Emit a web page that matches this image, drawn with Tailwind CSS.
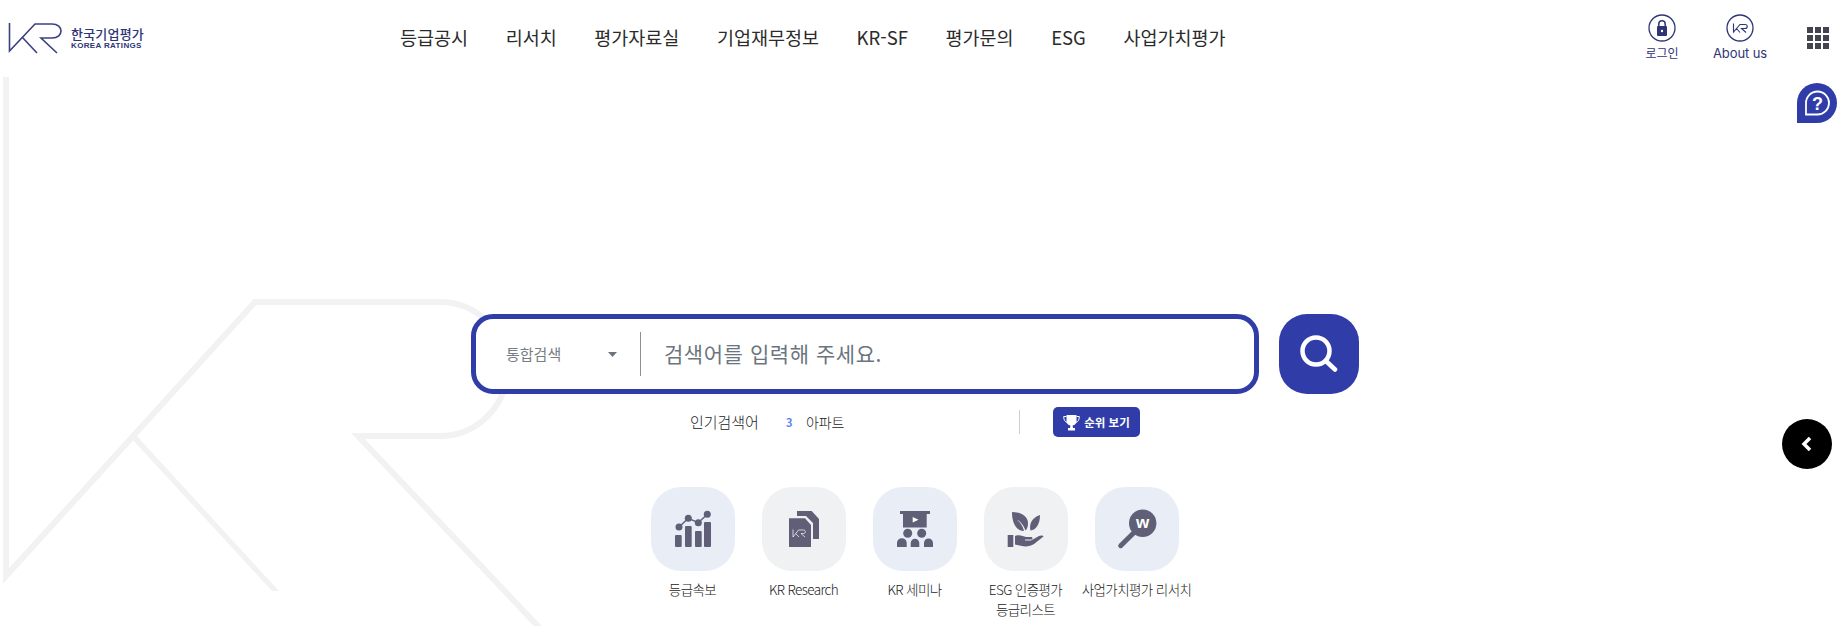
<!DOCTYPE html>
<html lang="ko">
<head>
<meta charset="utf-8">
<title>한국기업평가</title>
<script src="https://cdn.jsdelivr.net/npm/@tailwindcss/browser@4"></script>
</head>
<body class="relative h-[626px] w-[1837px] overflow-hidden bg-white font-['Noto_Sans_CJK_KR','Noto_Sans',sans-serif] text-[#333]">
<!-- background KR watermark -->
<svg class="absolute left-0 top-0" width="1837" height="626" viewBox="0 0 1837 626" fill="none" stroke="#f2f2f2" stroke-width="6">
  <path d="M6 77V576L255 302H440A67 67 0 0 1 440 436H358L551 640"/>
  <polygon points="135,434 279,591 272,591 131,438" fill="#f2f2f2" stroke="none"/>
</svg>

<header class="relative flex h-[78px] items-start">
  <div class="flex w-[400px] items-center gap-[9px] pl-[8px] pt-[22px]">
    <svg width="54" height="32" viewBox="0 0 54 32" fill="none" stroke="#3a4180" stroke-width="1.6">
      <path d="M1.5 1V29L27 2H44C56 2 56 16 44 16H33L49 31"/>
      <path d="M14 15L29 31"/>
    </svg>
    <div class="flex flex-col text-[#2e3577]">
      <span class="text-[13px] font-medium leading-[14px] tracking-[0.2px]">한국기업평가</span>
      <span class="font-['Liberation_Sans',sans-serif] text-[8px] font-bold leading-[9px] tracking-[0.35px]">KOREA RATINGS</span>
    </div>
  </div>
  <nav class="flex gap-[37.700px] pt-[24px] text-[18.500px] leading-[26px] tracking-[-0.03px] text-[#2b2b2b]">
    <a>등급공시</a><a>리서치</a><a>평가자료실</a><a>기업재무정보</a><a>KR-SF</a><a>평가문의</a><a>ESG</a><a>사업가치평가</a>
  </nav>
  <div class="ml-auto flex items-start pr-[8px] pt-[14px]">
    <div class="flex w-[60px] flex-col items-center">
      <svg width="28" height="28" viewBox="0 0 28 28">
        <circle cx="14" cy="14" r="13" fill="none" stroke="#2e3577" stroke-width="1.3"/>
        <rect x="9" y="12" width="10" height="10" rx="1" fill="#2e3577"/>
        <path d="M10.8 12V10a3.2 3.2 0 0 1 6.4 0V12" fill="none" stroke="#2e3577" stroke-width="1.5"/>
        <circle cx="14" cy="17" r="1.2" fill="#fff"/>
      </svg>
      <span class="mt-[2px] text-[12px] leading-[18px] text-[#2e3577]">로그인</span>
    </div>
    <div class="ml-[18px] flex w-[60px] flex-col items-center">
      <svg width="28" height="28" viewBox="0 0 28 28" fill="none" stroke="#2e3577">
        <circle cx="14" cy="14" r="13" stroke-width="1.3"/>
        <path d="M7.5 9.5V18L14 10.5H19C22 10.5 22 14.5 19 14.5H15.5L20 18.5M10.5 14.5L14 18.5" stroke-width="1.1"/>
      </svg>
      <span class="mt-[2px] font-['Inter','Noto_Sans',sans-serif] text-[13px] leading-[18px] tracking-[-0.1px] text-[#2e3577]">About us</span>
    </div>
    <div class="ml-[37px] mt-[13px] grid grid-cols-[6px_6px_6px] grid-rows-[6px_6px_6px] gap-[2px]">
      <i class="bg-[#44444e]"></i><i class="bg-[#44444e]"></i><i class="bg-[#44444e]"></i>
      <i class="bg-[#44444e]"></i><i class="bg-[#44444e]"></i><i class="bg-[#44444e]"></i>
      <i class="bg-[#44444e]"></i><i class="bg-[#44444e]"></i><i class="bg-[#44444e]"></i>
    </div>
  </div>
</header>

<!-- floating side buttons -->
<div class="absolute left-[1797px] top-[83px] flex h-[40px] w-[40px] items-center justify-center rounded-[20px] rounded-bl-none bg-[#303da8]">
  <svg width="26" height="26" viewBox="0 0 26 26">
    <path d="M2 24.500V13A11.500 11.500 0 1 1 13.500 24.500H2Z" fill="none" stroke="#fff" stroke-width="1.800"/>
    <text x="13.500" y="19.500" text-anchor="middle" font-size="18" font-weight="700" fill="#fff" font-family="Liberation Sans">?</text>
  </svg>
</div>
<div class="absolute left-[1782px] top-[419px] flex h-[50px] w-[50px] items-center justify-center rounded-full bg-black">
  <svg width="14" height="16" viewBox="0 0 14 16"><path d="M10 2L4 8L10 14" fill="none" stroke="#fff" stroke-width="3.500"/></svg>
</div>

<main class="relative pl-[471px] pt-[236px]">
  <div class="flex w-[888px] gap-[20px]">
    <div class="flex h-[80px] w-[788px] items-center rounded-[22px] border-[5px] border-[#303da8] bg-white">
      <span class="ml-[30px] w-[72px] text-[15px] leading-[20px] text-[#777e85]">통합검색</span>
      <svg class="ml-[30px]" width="10" height="5" viewBox="0 0 10 5"><path d="M0 0H9L4.500 5Z" fill="#6c757d"/></svg>
      <span class="ml-[22px] h-[44px] w-px bg-[#8a8f94]"></span>
      <span class="ml-[23px] -mt-[2px] text-[21px] leading-[30px] tracking-[0.55px] text-[#6c757d]">검색어를 입력해 주세요.</span>
    </div>
    <div class="flex h-[80px] w-[80px] items-center justify-center rounded-[28px] bg-[#303da8]">
      <svg width="38" height="38" viewBox="0 0 38 38" fill="none" stroke="#fff" stroke-width="4.500" stroke-linecap="round">
        <circle cx="16" cy="16" r="13.500"/><path d="M27 27L35 34.500"/>
      </svg>
    </div>
  </div>

  <div class="mt-[13px] flex h-[30px] items-center pl-[219px]">
    <span class="w-[96px] text-[15px] font-light leading-[20px] tracking-[-0.05px] text-[#222]">인기검색어</span>
    <span class="w-[20px] text-[11px] font-bold leading-[20px] text-[#5b85f0]">3</span>
    <span class="w-[213px] text-[14px] font-light leading-[20px] tracking-[-0.1px] text-[#222]">아파트</span>
    <span class="h-[24px] w-px bg-[#cfcfcf]"></span>
    <span class="ml-[33px] flex h-[30px] w-[87px] items-center justify-center gap-[4px] rounded-[5px] bg-[#303da8] text-[11.500px] font-bold leading-[16px] text-white">
      <svg width="17" height="17" viewBox="0 0 17 17" fill="#fff">
        <path d="M3.500 1H13.500V7.500C13.500 10 11 11.500 8.500 11.500S3.500 10 3.500 7.500Z"/>
        <path d="M3.500 2.500H.7C.7 6 2 8 4.500 8.500M13.500 2.500H16.300C16.300 6 15 8 12.500 8.500" fill="none" stroke="#fff" stroke-width="1"/>
        <path d="M7.500 11H9.500L10 14H12V16.500H5V14H7Z"/>
      </svg>
      순위 보기
    </span>
  </div>

  <ul class="ml-[166px] mt-[50px] flex">
    <li class="flex w-[111px] flex-col items-center">
      <div class="h-[84px] w-[84px] rounded-[30px] bg-[#e9eef6]">
        <svg width="84" height="84" viewBox="0 0 84 84" fill="#5f6078">
          <rect x="24" y="48" width="6.700" height="12" rx="1"/><rect x="34" y="39" width="6.700" height="21" rx="1"/><rect x="44" y="44" width="6.700" height="16" rx="1"/><rect x="53" y="35" width="7" height="25" rx="1"/>
          <path d="M28 40L37.300 31.300L47.300 35.700L56.300 27.300" fill="none" stroke="#5f6078" stroke-width="1.500"/>
          <circle cx="28" cy="40" r="3.500"/><circle cx="37.300" cy="31.300" r="3.500"/><circle cx="47.300" cy="35.700" r="3.500"/><circle cx="56.300" cy="27.300" r="3.500"/>
        </svg>
      </div>
      <span class="mt-[8px] text-center text-[13.500px] font-light leading-[20px] tracking-[-0.6px] text-[#222]">등급속보</span>
    </li>
    <li class="flex w-[111px] flex-col items-center">
      <div class="h-[84px] w-[84px] rounded-[30px] bg-[#eff1f3]">
        <svg width="84" height="84" viewBox="0 0 84 84" fill="#5f6078">
          <path d="M35 24H49.700L57 32V52H51V36L44 29H35Z"/>
          <path d="M27 31.300H43L49 38V60H27Z"/>
          <path d="M31 42.500V50L36.500 43H41.500C44 43 44 46.500 41.500 46.500H39L43 50M33.700 46.500L37 50" fill="none" stroke="#fff" stroke-width=".7"/>
        </svg>
      </div>
      <span class="mt-[8px] text-center text-[13.500px] font-light leading-[20px] tracking-[-0.6px] text-[#222]">KR Research</span>
    </li>
    <li class="flex w-[111px] flex-col items-center">
      <div class="h-[84px] w-[84px] rounded-[30px] bg-[#e9eef6]">
        <svg width="84" height="84" viewBox="0 0 84 84" fill="#5f6078">
          <rect x="27" y="24" width="30" height="3"/>
          <rect x="30" y="27" width="23.700" height="13.500"/>
          <path d="M39.700 30L45.500 32.700L39.700 35.500Z" fill="#fff"/>
          <circle cx="34.700" cy="46.300" r="4.500"/><circle cx="48.700" cy="46.300" r="4.500"/>
          <path d="M24 60V56A4.800 4.800 0 0 1 33.700 56V60ZM37.700 60V56A4.300 4.300 0 0 1 46.300 56V60ZM51 60V56A4.500 4.500 0 0 1 60 56V60Z"/>
        </svg>
      </div>
      <span class="mt-[8px] text-center text-[13.500px] font-light leading-[20px] tracking-[-0.6px] text-[#222]">KR 세미나</span>
    </li>
    <li class="flex w-[111px] flex-col items-center">
      <div class="h-[84px] w-[84px] rounded-[30px] bg-[#eff1f3]">
        <svg width="84" height="84" viewBox="0 0 84 84" fill="#5f6078">
          <path d="M28 25C36 25 44 29 44 36C44 40 43 42 41.500 43.500C39 36 34 33 33 33C36 35 39 39 40 44C33 44 28 37 28 25Z"/>
          <path d="M56 28C56 37 52 43 46.500 43.500C45 38 47 31 56 28Z"/>
          <rect x="23.700" y="48" width="5.600" height="12"/>
          <path d="M31 49C35 47 39 49 42 50H47C49 50 49 52.500 47 52.500H41V53.500H47L55 49C57 48 59 48.500 59.500 49.500L50 57C47 59 42 60 38 59L31 57.500Z"/>
        </svg>
      </div>
      <span class="mt-[8px] whitespace-nowrap text-center text-[13.500px] font-light leading-[20px] tracking-[-0.6px] text-[#222]">ESG 인증평가<br>등급리스트</span>
    </li>
    <li class="flex w-[111px] flex-col items-center">
      <div class="h-[84px] w-[84px] rounded-[30px] bg-[#e9eef6]">
        <svg width="84" height="84" viewBox="0 0 84 84" fill="#5f6078">
          <circle cx="47.700" cy="36.300" r="13.700"/>
          <path d="M38.300 46.300L25.700 58.700" stroke="#5f6078" stroke-width="5" stroke-linecap="round"/>
          <text x="47.700" y="41" text-anchor="middle" font-size="17" font-weight="700" fill="#fff" font-family="Liberation Sans">w</text>
        </svg>
      </div>
      <span class="mt-[8px] whitespace-nowrap text-center text-[13.500px] font-light leading-[20px] tracking-[-0.6px] text-[#222]">사업가치평가 리서치</span>
    </li>
  </ul>
</main>
</body>
</html>
